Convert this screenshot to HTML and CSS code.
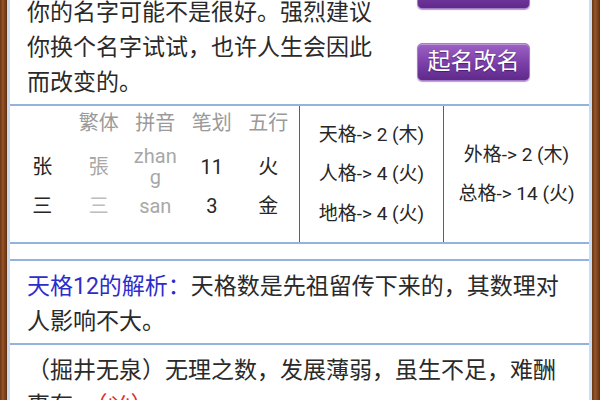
FILE: index.html
```html
<!DOCTYPE html>
<html lang="zh-CN">
<head>
<meta charset="utf-8">
<title>姓名测试</title>
<link rel="stylesheet" href="styles.css">
</head>
<body>
<div class="frame">
  <div class="wood"></div>
  <main class="panel">
    <section class="intro">
      <p class="intro-text">你的名字可能不是很好。强烈建议你换个名字试试，也许人生会因此而改变的。</p>
      <div class="actions">
        <button class="btn" aria-label="重新测名"></button>
        <button class="btn">起名改名</button>
      </div>
    </section>
    <section class="result">
      <div class="chars">
        <span class="cell head"></span>
        <span class="cell head">繁体</span>
        <span class="cell head">拼音</span>
        <span class="cell head">笔划</span>
        <span class="cell head">五行</span>
        <span class="cell dark">张</span>
        <span class="cell soft">張</span>
        <span class="cell soft">zhang</span>
        <span class="cell dark">11</span>
        <span class="cell dark">火</span>
        <span class="cell dark">三</span>
        <span class="cell faint">三</span>
        <span class="cell soft">san</span>
        <span class="cell dark">3</span>
        <span class="cell dark">金</span>
      </div>
      <div class="ge">
        <span>天格-&gt; 2 (木)</span>
        <span>人格-&gt; 4 (火)</span>
        <span>地格-&gt; 4 (火)</span>
      </div>
      <div class="ge">
        <span>外格-&gt; 2 (木)</span>
        <span>总格-&gt; 14 (火)</span>
      </div>
    </section>
    <div class="spacer"></div>
    <section class="note">
      <p><span class="label">天格12的解析：</span>天格数是先祖留传下来的，其数理对人影响不大。</p>
    </section>
    <section class="note">
      <p>（掘井无泉）无理之数，发展薄弱，虽生不足，难酬事有。<span class="bad">（凶）</span></p>
    </section>
  </main>
  <div class="wood"></div>
</div>
</body>
</html>
```

FILE: styles.css
```css
html, body {
  margin: 0;
  padding: 0;
  height: 400px;
  overflow: hidden;
  background: #ffffff;
}

body {
  font-family: Roboto, "Noto Sans CJK SC", sans-serif;
  color: #2a2a2a;
}

.frame {
  display: flex;
  height: 400px;
}

.wood {
  width: 7px;
  flex: none;
  background: linear-gradient(90deg, #6b3514 0%, #94552a 40%, #7d4219 70%, #5e2e10 100%);
}

.wood:last-child {
  width: 8px;
}

.panel {
  flex: 1;
  min-width: 0;
  border-left: 3px solid #cadcf2;
  border-right: 3px solid #cadcf2;
  background: #ffffff;
  display: flex;
  flex-direction: column;
}

/* intro */
.intro {
  height: 104px;
  flex: none;
  display: flex;
  align-items: flex-end;
  overflow: hidden;
  border-bottom: 2px solid #93b2de;
}

.intro-text {
  margin: 0 0 4px 17px;
  width: 355px;
  font-size: 23px;
  line-height: 35px;
}

.actions {
  margin-left: auto;
  margin-right: 59px;
  margin-bottom: 23px;
  display: flex;
  flex-direction: column;
  gap: 34px;
}

.btn {
  width: 113px;
  height: 38px;
  padding: 0;
  border: 1px solid #a57cc6;
  border-radius: 5px;
  background: linear-gradient(180deg, #9d62c4 0%, #7a3ea8 55%, #5f2a8a 100%);
  box-shadow: inset 0 1px 0 rgba(255, 255, 255, 0.35), 0 1px 1px rgba(60, 20, 90, 0.4);
  color: #ffffff;
  font-family: Roboto, "Noto Sans CJK SC", sans-serif;
  font-size: 23px;
  line-height: 36px;
  text-shadow: 0 1px 1px rgba(40, 0, 60, 0.5);
}

/* result table */
.result {
  height: 136px;
  flex: none;
  display: flex;
  border-bottom: 2px solid #93b2de;
}

.chars {
  width: 290px;
  flex: none;
  box-sizing: border-box;
  padding: 7px 0 0 4px;
  display: grid;
  grid-template-columns: repeat(5, 56.5px);
  grid-auto-rows: min-content;
  row-gap: 8px;
  align-items: center;
  border-right: 1px solid #4d5e9e;
}

.cell {
  box-sizing: border-box;
  padding: 0 6px;
  text-align: center;
  font-size: 20px;
  line-height: 21px;
  word-break: break-all;
}

.head {
  color: #9a9a9a;
  padding-bottom: 4px;
}

.dark {
  color: #262626;
}

.soft {
  color: #a8a8a8;
}

.faint {
  color: #bdbdbd;
}

.ge {
  flex: 1;
  display: flex;
  flex-direction: column;
  justify-content: center;
  align-items: center;
  font-size: 19px;
  line-height: 39.5px;
  color: #262626;
}

.ge + .ge {
  border-left: 1px solid #4d5e9e;
}

.ge:nth-child(2) {
  flex: none;
  width: 143px;
}

.spacer {
  height: 15px;
  flex: none;
  border-bottom: 2px solid #93b2de;
}

/* notes */
.note {
  flex: none;
  height: 84px;
  box-sizing: border-box;
  padding: 8px 15px 0 17px;
  border-bottom: 2px solid #93b2de;
}

.note:last-child {
  height: auto;
  border-bottom: none;
}

.note p {
  margin: 0;
  font-size: 23px;
  line-height: 35px;
}

.label {
  color: #2d2dcc;
}

.bad {
  color: #e03030;
}
```
